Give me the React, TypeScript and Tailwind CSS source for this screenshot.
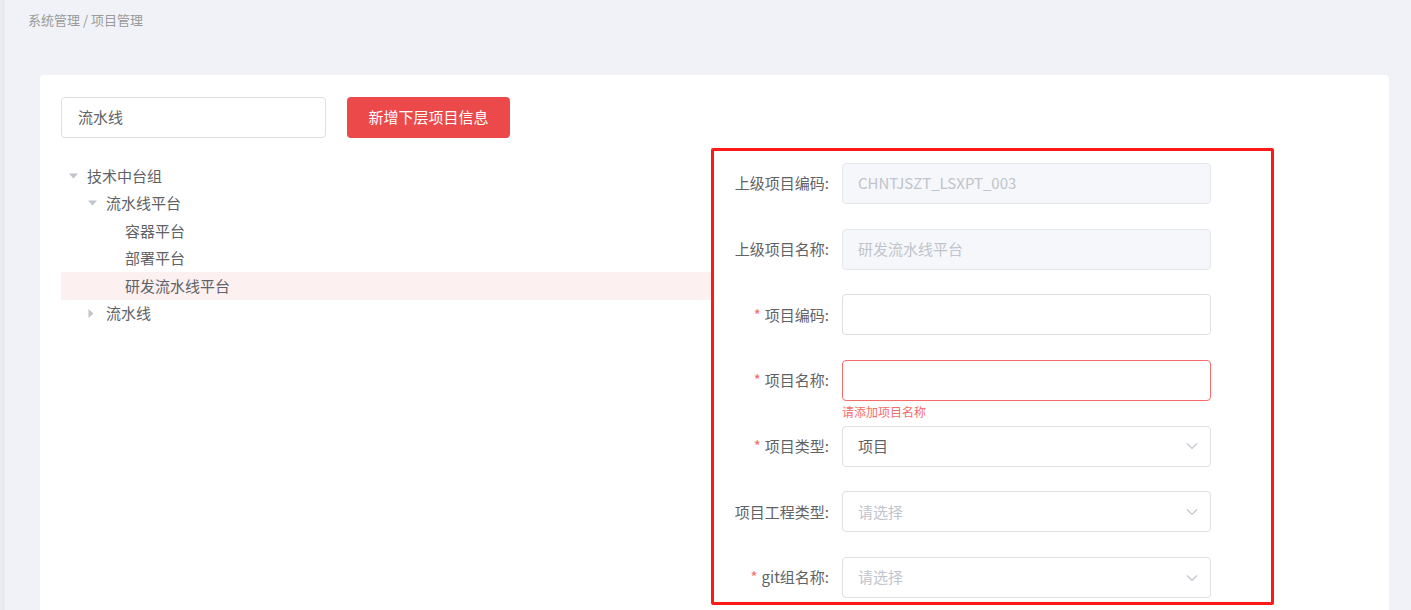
import React from "react";

const font = { fontFamily: '"Noto Sans CJK SC", "Noto Sans", sans-serif' };

type Node = { label: string; level: number; caret?: "down" | "right"; active?: boolean };

const tree: Node[] = [
  { label: "技术中台组", level: 0, caret: "down" },
  { label: "流水线平台", level: 1, caret: "down" },
  { label: "容器平台", level: 2 },
  { label: "部署平台", level: 2 },
  { label: "研发流水线平台", level: 2, active: true },
  { label: "流水线", level: 1, caret: "right" },
];

const indent = ["pl-0", "pl-[19px]", "pl-[38px]"];

function Caret({ dir }: { dir?: "down" | "right" }) {
  if (!dir) return <span className="w-[26px]" />;
  return (
    <span className="w-[26px] flex items-center pl-[8px]">
      {dir === "down" ? (
        <svg width="9" height="6" viewBox="0 0 9 6">
          <path d="M0 0.5 L9 0.5 L4.5 5.5 Z" fill="#c0c4cc" />
        </svg>
      ) : (
        <svg width="6" height="9" viewBox="0 0 6 9">
          <path d="M0.5 0 L5.5 4.5 L0.5 9 Z" fill="#c0c4cc" />
        </svg>
      )}
    </span>
  );
}

function Chevron() {
  return (
    <svg width="12" height="7" viewBox="0 0 12 7" className="absolute right-[13px] top-1/2 -translate-y-1/2">
      <path d="M1 1 L6 6 L11 1" fill="none" stroke="#c0c4cc" strokeWidth="1.1" />
    </svg>
  );
}

function Label({ text, required }: { text: string; required?: boolean }) {
  return (
    <div className="w-[128px] pr-[13px] h-[41px] flex items-center justify-end text-[15px] text-[#606266] shrink-0">
      {required && <span className="text-[#f56c6c] mr-[4px]">*</span>}
      {text}
    </div>
  );
}

function Field({
  label,
  required,
  value,
  placeholder,
  disabled,
  error,
  select,
}: {
  label: string;
  required?: boolean;
  value?: string;
  placeholder?: string;
  disabled?: boolean;
  error?: string;
  select?: boolean;
}) {
  const box = disabled
    ? "bg-[#f5f7fa] border-[#e4e7ed] text-[#c0c4cc]"
    : error
    ? "bg-white border-[#f56c6c] text-[#606266]"
    : "bg-white border-[#dcdfe6] text-[#606266]";
  return (
    <div className="flex h-[41px]">
      <Label text={label} required={required} />
      <div className="relative w-[369px]">
        <div className={`h-[41px] border rounded-[4px] pl-[15px] flex items-center text-[15px] ${box}`}>
          {value ? <span>{value}</span> : <span className="text-[#c0c4cc]">{placeholder}</span>}
        </div>
        {select && <Chevron />}
        {error && (
          <div className="absolute left-0 top-[44px] text-[12px] leading-[16px] text-[#f56c6c]">{error}</div>
        )}
      </div>
    </div>
  );
}

export default function App() {
  return (
    <div className="min-h-[610px] bg-[#f0f2f7] flex" style={font}>
      <div className="w-[5px] bg-[#e8eaee] shrink-0" />
      <div className="flex-1 pl-[23px] pr-[22px]">
        <div className="h-[75px] pt-[11px] text-[13px] leading-[18px] text-[#9a9a9a]">系统管理 / 项目管理</div>
        <div className="ml-[12px] bg-white rounded-t-[4px] h-[535px] pl-[21px] pt-[22px] overflow-hidden">
          <div className="flex gap-[21px]">
            <div className="w-[265px] h-[41px] border border-[#dcdfe6] rounded-[4px] pl-[16px] flex items-center text-[15px] text-[#606266]">
              流水线
            </div>
            <button className="w-[163px] h-[41px] rounded-[4px] bg-[#ec4a4a] text-white text-[15px]">新增下层项目信息</button>
          </div>
          <div className="flex mt-[10px]">
            <div className="w-[650px] pt-[14px]">
              {tree.map((n) => (
                <div
                  key={n.label + n.level}
                  className={`h-[27.5px] flex items-center text-[15px] text-[#606266] ${indent[n.level]} ${
                    n.active ? "bg-[#fdf0f0]" : ""
                  }`}
                >
                  <Caret dir={n.caret} />
                  <span>{n.label}</span>
                </div>
              ))}
            </div>
            <div className="w-[563px] h-[457px] border-[3px] border-[#ff1a1a] rounded-[2px] pt-[12px] flex flex-col gap-[24.7px]">
              <Field label="上级项目编码:" value="CHNTJSZT_LSXPT_003" disabled />
              <Field label="上级项目名称:" value="研发流水线平台" disabled />
              <Field label="项目编码:" required />
              <Field label="项目名称:" required error="请添加项目名称" />
              <Field label="项目类型:" required value="项目" select />
              <Field label="项目工程类型:" placeholder="请选择" select />
              <Field label="git组名称:" required placeholder="请选择" select />
            </div>
          </div>
        </div>
      </div>
    </div>
  );
}
